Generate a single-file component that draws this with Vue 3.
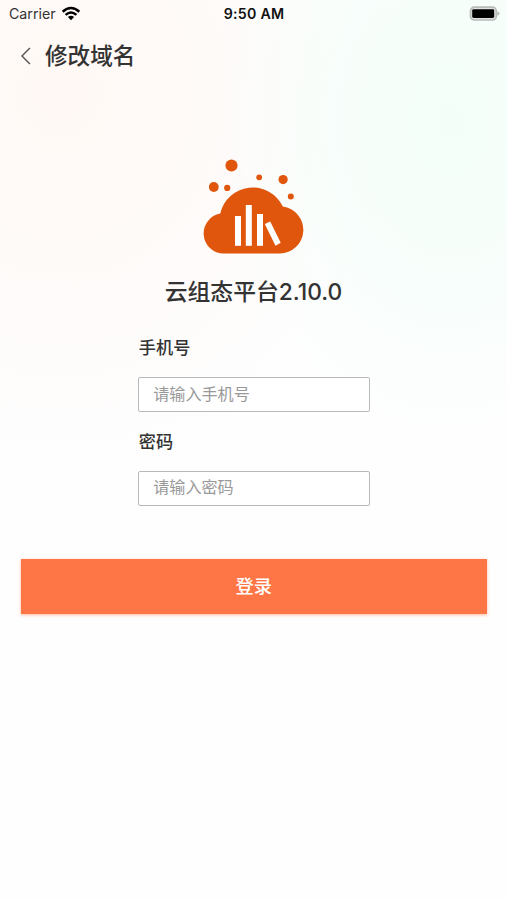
<script setup>
import { ref } from 'vue'

const phone = ref('')
const password = ref('')
</script>

<template>
  <main class="screen">
    <div class="status">
      <div class="carrier">
        <span>Carrier</span>
        <svg width="20" height="16" viewBox="0 0 20 16">
          <path d="M1.7 5.7Q10 -1.8 18.3 5.7" />
          <path d="M4.6 8.9Q10 4 15.4 8.9" />
          <path class="wedge" d="M6.9 11.1Q10 8.4 13.1 11.1L10 14.3Z" />
        </svg>
      </div>
      <span class="time">9:50 AM</span>
      <svg class="battery" width="32" height="16" viewBox="0 0 32 16">
        <rect class="shell" x="1.5" y="1.2" width="25.8" height="12.8" rx="3.8" />
        <rect x="3.2" y="3.2" width="22" height="8.8" rx="1.4" />
        <path class="tip" d="M28.3 5.3Q30.6 6.1 30.6 7.6Q30.6 9.1 28.3 9.9Z" />
      </svg>
    </div>

    <header class="nav">
      <svg width="12" height="20" viewBox="0 0 12 20">
        <path d="M9.9 1.9L2 10L9.9 18.1" />
      </svg>
      <h1>修改域名</h1>
    </header>

    <section class="brand">
      <svg width="130" height="120" viewBox="-0.8 0 130 120">
        <circle cx="41.7" cy="20.5" r="6.1" />
        <circle cx="24" cy="42" r="4.9" />
        <circle cx="37.4" cy="42.9" r="3.1" />
        <circle cx="69.4" cy="32.3" r="2.9" />
        <circle cx="93.3" cy="34.6" r="4.6" />
        <circle cx="101" cy="51.6" r="3" />
        <path d="M34 108.5A20.1 20.1 0 0 1 30.5 68.6A33.2 33.2 0 0 1 93 61.5A23.6 23.6 0 0 1 90 108.5Z" />
        <g class="bars">
          <rect x="45.2" y="71" width="6" height="29.8" />
          <rect x="56" y="60" width="6" height="40.8" />
          <rect x="67.2" y="69" width="6" height="31.8" />
          <path d="M75 79L80.4 76.4L90.9 97.8L85.7 100.7Z" />
        </g>
      </svg>
      <h2>云组态平台2.10.0</h2>
    </section>

    <form class="form" @submit.prevent>
      <div class="fields">
        <label for="phone">手机号</label>
        <input id="phone" v-model="phone" type="tel" placeholder="请输入手机号" />
        <label for="password">密码</label>
        <input id="password" v-model="password" type="password" placeholder="请输入密码" />
      </div>
      <button type="submit">登录</button>
    </form>
  </main>
</template>

<style>
body {
  margin: 0;
}
</style>

<style scoped>
.screen {
  box-sizing: border-box;
  height: 900px;
  overflow: hidden;
  color: #333;
  font-family: Inter, "Noto Sans CJK SC", sans-serif;
  background:
    radial-gradient(ellipse 240px 330px at 450px 120px, #f3fef8 0%, rgba(245, 255, 250, 0.65) 50%, rgba(255, 255, 255, 0) 100%),
    radial-gradient(ellipse 340px 380px at 60px 90px, #fff8f5 0%, rgba(255, 250, 248, 0.7) 55%, rgba(255, 255, 255, 0) 100%),
    #fefefe;
}
.status {
  display: grid;
  grid-template-columns: 1fr auto 1fr;
  align-items: center;
  height: 27px;
  padding: 0 6px 0 9px;
  color: #111;
}
.carrier {
  display: flex;
  align-items: center;
  gap: 5px;
  color: #333;
}
.carrier span {
  font-size: 14.2px;
}
.carrier path {
  fill: none;
  stroke: #000;
  stroke-width: 2.5;
}
.carrier .wedge {
  fill: #000;
  stroke: none;
}
.time {
  margin-right: 2px;
  font-weight: 600;
  font-size: 14.2px;
  letter-spacing: 0.25px;
}
.battery {
  justify-self: end;
}
.battery .shell {
  fill: #e2e3e2;
  stroke: #b8bbb9;
  stroke-width: 1.7;
}
.battery .tip {
  fill: #b8bbb9;
}
.nav {
  display: flex;
  align-items: center;
  gap: 13px;
  height: 57px;
  padding-left: 20px;
}
.nav path {
  fill: none;
  stroke: #555;
  stroke-width: 1.4;
}
h1,
h2 {
  margin: 0;
  font-size: 22.6px;
  font-weight: 500;
  line-height: 34px;
}
.brand {
  display: flex;
  flex-direction: column;
  align-items: center;
  padding-top: 61px;
}
.brand svg {
  fill: #df560c;
}
.bars {
  fill: #fff;
}
.brand h2 {
  margin-top: 10px;
  font-size: 22.8px;
}
.form {
  padding: 25px 20.5px 0 21px;
}
.fields {
  display: flex;
  flex-direction: column;
  width: 232px;
  margin: 0 auto;
}
label {
  height: 28px;
  margin-bottom: 15px;
  padding-left: 1px;
  font-size: 17.2px;
  font-weight: 500;
  line-height: 28px;
}
input {
  box-sizing: border-box;
  width: 232px;
  height: 35px;
  margin: 0 0 15.5px;
  padding: 0 14px 2px 14.5px;
  border: 1px solid #b9b9b9;
  border-radius: 2px;
  outline: none;
  background: #fff;
  color: #333;
  font-family: inherit;
  font-size: 16.1px;
}
input::placeholder {
  color: #999;
  opacity: 1;
}
button {
  display: block;
  width: 100%;
  height: 55.5px;
  margin-top: 37.5px;
  padding: 0 0 2px;
  border: 0;
  background: #ff7646;
  box-shadow: 0 1px 3px rgba(255, 118, 70, 0.5);
  color: #fff;
  font-family: inherit;
  font-size: 18.3px;
  font-weight: 500;
}
</style>
